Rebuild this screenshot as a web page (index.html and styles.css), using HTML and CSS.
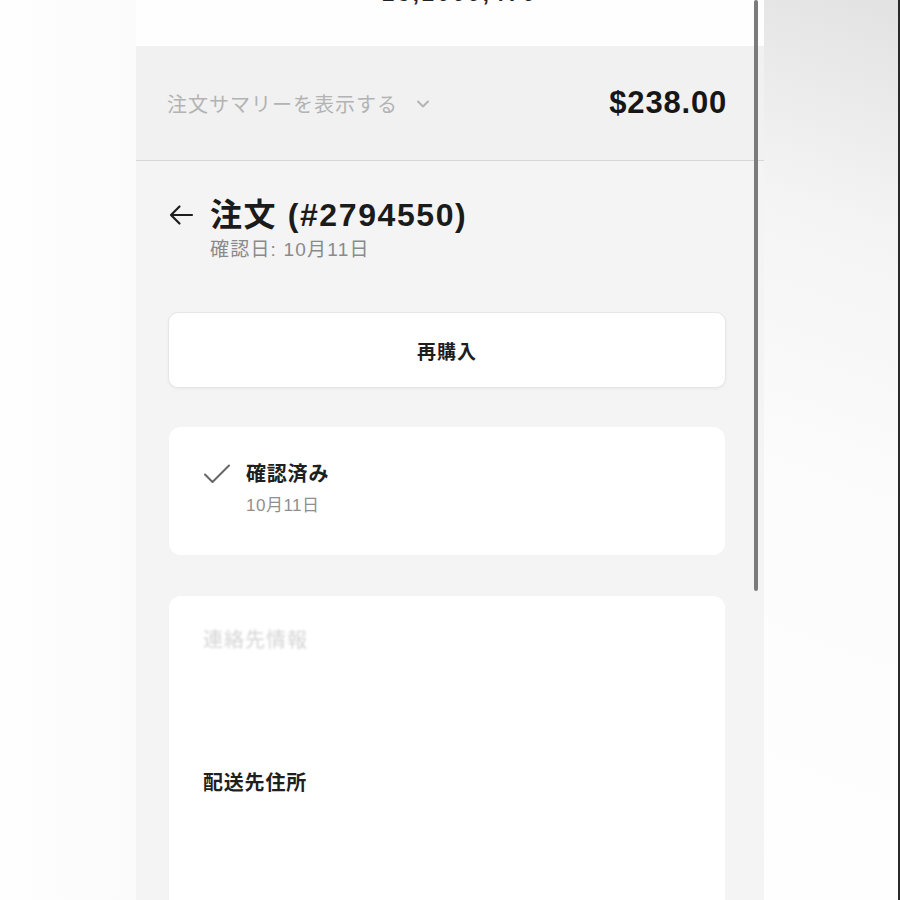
FILE: index.html
```html
<!DOCTYPE html>
<html lang="ja">
<head>
<meta charset="utf-8">
<title>注文 (#2794550)</title>
<link rel="stylesheet" href="styles.css">
</head>
<body>
<div class="stage">
  <div class="left-gap"></div>
  <main class="panel">
    <div class="top-strip"><span class="cut-text">23,2000,470</span></div>
    <div class="summary-bar">
      <div class="summary-toggle">
        <span>注文サマリーを表示する</span>
        <svg class="chev" width="14" height="10" viewBox="0 0 14 10"><path d="M2 2.5 L7 7.5 L12 2.5" fill="none" stroke="#b4b4b4" stroke-width="2" stroke-linecap="round" stroke-linejoin="round"/></svg>
      </div>
      <div class="summary-total">$238.00</div>
    </div>
    <div class="content">
      <div class="order-head">
        <div class="title-row">
          <svg class="back" width="26" height="22" viewBox="0 0 26 22"><path d="M24 11 H3 M11.5 2.5 L3 11 L11.5 19.5" fill="none" stroke="#1e1e1e" stroke-width="2.2" stroke-linecap="round" stroke-linejoin="round"/></svg>
          <h1>注文 (#2794550)</h1>
        </div>
        <div class="confirm-date">確認日: 10月11日</div>
      </div>
      <button class="rebuy">再購入</button>
      <section class="card status-card">
        <svg class="check" width="28" height="22" viewBox="0 0 28 22"><path d="M2 11.5 L9.5 19 L26 2.5" fill="none" stroke="#666" stroke-width="2" stroke-linecap="round" stroke-linejoin="round"/></svg>
        <div class="status-text">
          <div class="status-title">確認済み</div>
          <div class="status-date">10月11日</div>
        </div>
      </section>
      <section class="card info-card">
        <div class="faded-label">連絡先情報</div>
        <div class="info-blank"></div>
        <div class="info-label">配送先住所</div>
      </section>
    </div>
    <div class="scrollbar"></div>
  </main>
  <div class="right-gap"></div>
</div>
</body>
</html>
```

FILE: styles.css
```css
html, body {
  margin: 0;
  padding: 0;
  height: 100%;
  overflow: hidden;
}
body {
  background: #fcfcfc;
  font-family: "Liberation Sans", "Noto Sans CJK JP", sans-serif;
  color: #1c1c1c;
}
.stage {
  display: flex;
  height: 900px;
}
.left-gap {
  width: 136px;
  flex: none;
  background: linear-gradient(90deg, #fefefe 0%, #fbfbfb 100%);
}
.panel {
  position: relative;
  width: 628px;
  flex: none;
  background: #f4f4f4;
  overflow: hidden;
}
.right-gap {
  flex: 1;
  background: linear-gradient(200deg, #e2e2e2 0%, #f4f4f4 25%, #fcfcfc 55%, #fefefe 100%);
  border-right: 2px solid #2a2a2a;
}
.top-strip {
  height: 46px;
  background: #fefefe;
  display: flex;
  justify-content: center;
  overflow: hidden;
}
.cut-text {
  margin-top: -17px;
  margin-left: 20px;
  font-size: 22px;
  line-height: 22px;
  font-weight: 700;
  color: #222;
  letter-spacing: 3px;
}
.summary-bar {
  height: 114px;
  background: #f1f1f1;
  border-bottom: 1px solid #d6d6d6;
  display: flex;
  align-items: center;
  justify-content: space-between;
  padding: 0 37px 0 31px;
}
.summary-toggle {
  display: flex;
  align-items: center;
  gap: 18px;
  font-size: 20px;
  color: #b3b3b3;
  letter-spacing: 1px;
}
.chev {
  margin-top: 1px;
}
.summary-total {
  font-size: 31px;
  font-weight: 700;
  color: #161616;
  letter-spacing: 0.8px;
}
.content {
  padding: 36px 38px 0 32px;
  display: flex;
  flex-direction: column;
}
.title-row {
  display: flex;
  align-items: center;
  gap: 16px;
  height: 36px;
}
.back {
  flex: none;
}
h1 {
  margin: 0;
  font-size: 32px;
  line-height: 36px;
  font-weight: 700;
  color: #1b1b1b;
  letter-spacing: 1.6px;
}
.confirm-date {
  margin: 4px 0 0 42px;
  font-size: 19px;
  line-height: 26px;
  color: #8a8a8a;
  letter-spacing: 1.2px;
}
.rebuy {
  margin-top: 49px;
  height: 76px;
  background: #ffffff;
  border: 1px solid #e6e6e6;
  border-radius: 10px;
  box-shadow: 0 1px 3px rgba(0, 0, 0, 0.05);
  font-family: inherit;
  font-size: 19px;
  font-weight: 700;
  color: #1e1e1e;
  letter-spacing: 1px;
}
.card {
  background: #ffffff;
  border-radius: 12px;
  margin-left: 1px;
  margin-right: 1px;
}
.status-card {
  margin-top: 39px;
  height: 128px;
  box-sizing: border-box;
  padding: 33px 34px 0 34px;
  display: flex;
  gap: 15px;
}
.check {
  flex: none;
  margin-top: 3px;
}
.status-title {
  font-size: 20px;
  line-height: 28px;
  font-weight: 700;
  color: #1f1f1f;
  letter-spacing: 0.8px;
}
.status-date {
  margin-top: 6px;
  font-size: 17px;
  line-height: 24px;
  color: #8f8f8f;
  letter-spacing: 0.5px;
}
.info-card {
  margin-top: 41px;
  height: 320px;
  padding: 30px 34px 0 34px;
}
.faded-label {
  font-size: 20px;
  line-height: 28px;
  color: #d4d4d4;
  letter-spacing: 1px;
  filter: blur(1.2px);
}
.info-blank {
  height: 115px;
}
.info-label {
  font-size: 20px;
  line-height: 28px;
  font-weight: 700;
  color: #1f1f1f;
  letter-spacing: 0.8px;
}
.scrollbar {
  position: absolute;
  left: 618px;
  top: 0;
  width: 4px;
  height: 591px;
  background: #7b7b7b;
  border-radius: 2px;
}
```
